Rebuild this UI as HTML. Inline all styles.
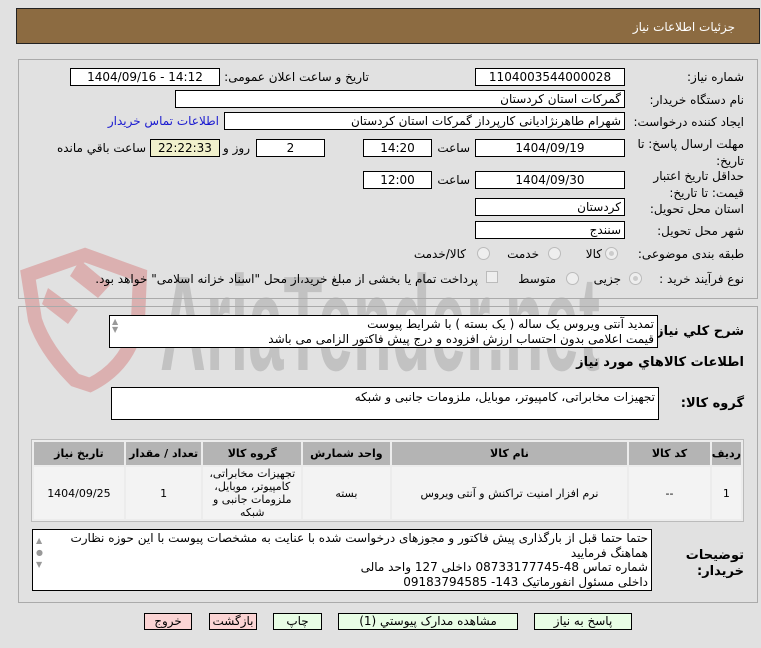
<!DOCTYPE html>
<html><head><meta charset="utf-8"><style>
*{box-sizing:border-box;margin:0;padding:0}
body{width:761px;height:648px;background:#e1e1e1;font-family:Tahoma,"DejaVu Sans","Liberation Sans",sans-serif;font-size:12px;color:#000;position:relative;overflow:hidden}
.a{position:absolute}
.box{position:absolute;background:#fff;border:1px solid #000;height:18px;line-height:16px;text-align:center;font-size:12px}
.lb{position:absolute;direction:rtl;white-space:nowrap;font-size:12px}
.b{font-weight:bold}
.rad{position:absolute;width:13px;height:13px;border-radius:50%;border:1px solid #bbb;background:#eee}
.rad.on::after{content:"";position:absolute;left:3px;top:3px;width:5px;height:5px;border-radius:50%;background:#ccc}
.ta{position:absolute;background:#fff;border:1px solid #000;direction:rtl;text-align:right;padding:1px 3px;line-height:15px}
table{border-collapse:separate;border-spacing:2px;background:#ececec;border:1px solid #bbb}
td,th{font-size:11px;text-align:center}
th{background:#b4b4b4;height:23px}
td{background:#f3f3f3;height:52px;line-height:13px}
.btn{position:absolute;top:613px;height:17px;border:1px solid #000;text-align:center;line-height:15px;font-size:12px;direction:rtl}
.g{background:#e8fde5}.r{background:#fbd4d4}
.sb{position:absolute;color:#999;font-size:8px;line-height:8px}
</style></head><body>
<div class="a" style="left:16px;top:8px;width:744px;height:36px;background:#8c6b41;border:1px solid #222"></div>
<div class="lb" style="right:26px;top:20px;color:#fff">جزئيات اطلاعات نياز</div>

<svg class="a" style="left:0;top:240px" width="640" height="160">
<path d="M28 35 L85 15 L140 35 L138 80 Q130 125 90 145 L75 140 Q45 110 35 80 Z" fill="none" stroke="#dbb0b0" stroke-width="14"/>
<path d="M48 48 L78 70 L68 84 L42 64 Z M80 20 L110 45 L98 58 L70 36 Z" fill="#dbb0b0"/>
<text x="160" y="130" font-family="Liberation Sans,sans-serif" font-weight="bold" font-size="135" fill="#c2c2c2" textLength="440" lengthAdjust="spacingAndGlyphs">AriaTender.net</text>
</svg>

<div class="a" style="left:18px;top:59px;width:740px;height:240px;border:1px solid #aaa"></div>
<div class="a" style="left:18px;top:306px;width:740px;height:297px;border:1px solid #aaa"></div>

<div class="lb" style="right:17px;top:70px">شماره نياز:</div>
<div class="box" style="left:475px;top:68px;width:150px">1104003544000028</div>
<div class="lb" style="right:392px;top:70px">تاریخ و ساعت اعلان عمومی:</div>
<div class="box" style="left:70px;top:68px;width:150px">1404/09/16 - 14:12</div>

<div class="lb" style="right:17px;top:93px">نام دستگاه خريدار:</div>
<div class="box" style="left:175px;top:90px;width:450px;text-align:right;padding-right:3px">گمرکات استان کردستان</div>

<div class="lb" style="right:17px;top:115px">ايجاد کننده درخواست:</div>
<div class="box" style="left:224px;top:112px;width:401px;text-align:right;padding-right:3px">شهرام  طاهرنژادیانی کارپرداز گمرکات استان کردستان</div>
<div class="lb" style="right:542px;top:114px;color:#1a1ad0">اطلاعات تماس خریدار</div>

<div class="lb" style="right:17px;top:136px;line-height:17px;text-align:right">مهلت ارسال پاسخ: تا<br>تاريخ:</div>
<div class="box" style="left:475px;top:139px;width:150px">1404/09/19</div>
<div class="lb" style="right:291px;top:141px">ساعت</div>
<div class="box" style="left:363px;top:139px;width:69px">14:20</div>
<div class="box" style="left:256px;top:139px;width:69px">2</div>
<div class="lb" style="right:511px;top:141px">روز و</div>
<div class="box" style="left:150px;top:139px;width:70px;background:#f0f0cc">22:22:33</div>
<div class="lb" style="right:615px;top:141px">ساعت باقي مانده</div>

<div class="lb" style="right:17px;top:168px;line-height:17px;text-align:right">حداقل تاريخ اعتبار<br>قيمت: تا تاريخ:</div>
<div class="box" style="left:475px;top:171px;width:150px">1404/09/30</div>
<div class="lb" style="right:291px;top:173px">ساعت</div>
<div class="box" style="left:363px;top:171px;width:69px">12:00</div>

<div class="lb" style="right:17px;top:202px">استان محل تحويل:</div>
<div class="box" style="left:475px;top:198px;width:150px;text-align:right;padding-right:3px">کردستان</div>
<div class="lb" style="right:17px;top:224px">شهر محل تحويل:</div>
<div class="box" style="left:475px;top:221px;width:150px;text-align:right;padding-right:3px">سنندج</div>

<div class="lb" style="right:17px;top:247px">طبقه بندی موضوعی:</div>
<div class="rad on" style="left:605px;top:247px"></div><div class="lb" style="right:159px;top:247px">کالا</div>
<div class="rad" style="left:548px;top:247px"></div><div class="lb" style="right:222px;top:247px">خدمت</div>
<div class="rad" style="left:477px;top:247px"></div><div class="lb" style="right:295px;top:247px">کالا/خدمت</div>

<div class="lb" style="right:17px;top:272px">نوع فرآیند خرید :</div>
<div class="rad on" style="left:629px;top:272px"></div><div class="lb" style="right:140px;top:272px">جزیی</div>
<div class="rad" style="left:566px;top:272px"></div><div class="lb" style="right:205px;top:272px">متوسط</div>
<div class="a" style="left:486px;top:271px;width:12px;height:12px;border:1px solid #bbb;background:#eee"></div>
<div class="lb" style="right:283px;top:272px">پرداخت تمام یا بخشی از مبلغ خرید،از محل "اسناد خزانه اسلامی" خواهد بود.</div>

<div class="lb b" style="right:17px;top:324px;font-size:13px">شرح کلي نياز:</div>
<div class="ta" style="left:109px;top:315px;width:549px;height:33px">تمدید آنتی ویروس یک ساله ( یک بسته ) با شرایط پیوست<br>قیمت اعلامی بدون احتساب ارزش افزوده و درج پیش فاکتور الزامی می باشد</div>
<div class="sb" style="left:112px;top:318px">▲<br>▼</div>
<div class="lb b" style="right:17px;top:355px;font-size:13px">اطلاعات کالاهاي مورد نياز</div>
<div class="lb b" style="right:17px;top:396px;font-size:13px">گروه کالا:</div>
<div class="ta" style="left:111px;top:387px;width:548px;height:33px;padding-top:2px">تجهیزات مخابراتی، کامپیوتر، موبایل، ملزومات جانبی و شبکه</div>

<table class="a" style="left:31px;top:439px;width:713px;direction:ltr">
<tr><th style="width:90px">تاریخ نیاز</th><th style="width:76px">تعداد / مقدار</th><th style="width:98px">گروه کالا</th><th style="width:87px">واحد شمارش</th><th style="width:237px">نام کالا</th><th style="width:81px">کد کالا</th><th style="width:26px">ردیف</th></tr>
<tr><td>1404/09/25</td><td>1</td><td style="direction:rtl">تجهیزات مخابراتی، کامپیوتر، موبایل، ملزومات جانبی و شبکه</td><td>بسته</td><td>نرم افزار امنیت تراکنش و آنتی ویروس</td><td>--</td><td>1</td></tr>
</table>

<div class="lb b" style="right:17px;top:548px;font-size:13px;line-height:16px;text-align:right">توضیحات<br>خریدار:</div>
<div class="ta" style="left:32px;top:529px;width:620px;height:62px;padding-left:22px;font-size:12px;line-height:14.5px">حتما حتما قبل از بارگذاری پیش فاکتور و مجوزهای درخواست شده با عنایت به مشخصات پیوست با این حوزه نظارت هماهنگ فرمایید<br>شماره تماس 48-08733177745 داخلی 127 واحد مالی<br>داخلی مسئول انفورماتیک 143- 09183794585</div>
<div class="sb" style="left:36px;top:535px;line-height:12px">▲<br>●<br>▼</div>

<div class="btn g" style="left:534px;width:98px">پاسخ به نیاز</div>
<div class="btn g" style="left:338px;width:180px">مشاهده مدارک پیوستي (1)</div>
<div class="btn g" style="left:273px;width:49px">چاپ</div>
<div class="btn r" style="left:209px;width:48px">بازگشت</div>
<div class="btn r" style="left:144px;width:48px">خروج</div>
</body></html>
